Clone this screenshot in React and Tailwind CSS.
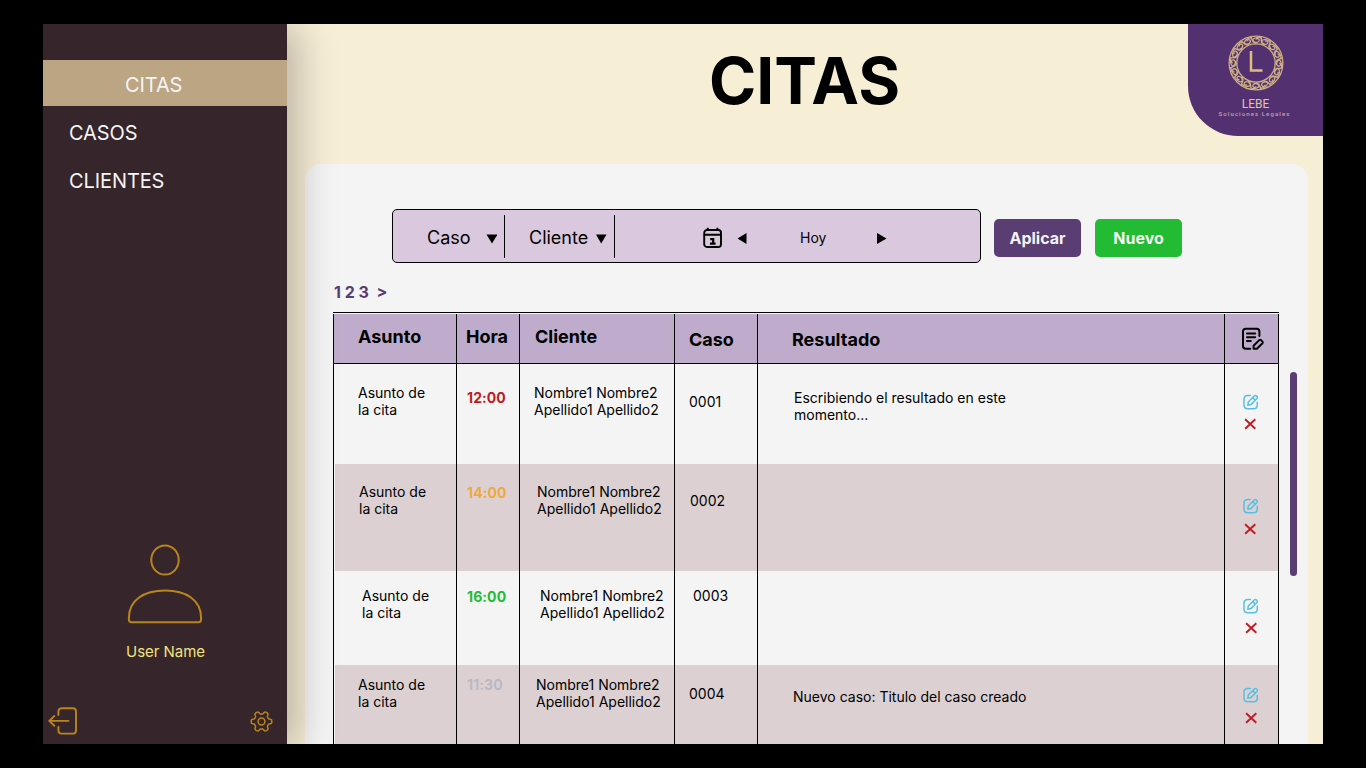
import React from "react";

const gearPath =
  Array.from({ length: 120 }, (_, i) => {
    const t = (i / 120) * Math.PI * 2;
    const r = 8.9 + 1.45 * Math.tanh(2.2 * Math.cos(6 * t));
    return `${i ? "L" : "M"}${(11.5 + r * Math.cos(t)).toFixed(2)} ${(11.5 + r * Math.sin(t)).toFixed(2)}`;
  }).join("") + "Z";

const ringAngles = Array.from({ length: 16 }, (_, i) => i * 22.5);

function Crest() {
  return (
    <svg width="56" height="56" viewBox="-28 -28 56 56" fill="none" stroke="#cdb084" className="shrink-0">
      <circle r="26.9" strokeWidth="1.3" />
      <circle r="19.2" strokeWidth="1.3" />
      {ringAngles.map((a) => (
        <g key={a} transform={`rotate(${a})`} strokeWidth="1.3">
          <path d="M-5 -26C-4 -21 1 -19 3 -22C4 -24.5 .5 -25.5 0 -23.3" />
          <path d="M5 -25C2 -26.5 -3 -25 -3.5 -22.5C-3.5 -20.5 -.5 -20 0 -19.5" />
        </g>
      ))}
      <path d="M-5 -12V7.600H6.500" stroke="#e0bd7c" strokeWidth="2.500" />
    </svg>
  );
}

function UserIcon() {
  return (
    <svg width="76" height="80" viewBox="0 0 76 80" fill="none" stroke="#b8861b" strokeWidth="2">
      <ellipse cx="38" cy="16" rx="13.7" ry="14.6" />
      <path d="M1.9 74C1.9 56 17 46.6 38 46.6S74.100 56 74.100 74V75.500Q74.100 78.200 71.400 78.200H4.600Q1.900 78.200 1.900 75.500Z" />
    </svg>
  );
}

function LogoutIcon() {
  return (
    <svg width="30" height="28" viewBox="0 0 30 28" fill="none" stroke="#b8861b" strokeWidth="1.9" strokeLinecap="round" strokeLinejoin="round">
      <path d="M10.400 8V4.500Q10.400 1.300 13.600 1.300H24.800Q28 1.300 28 4.500V23.400Q28 26.600 24.800 26.600H13.600Q10.400 26.600 10.400 23.400V20" />
      <path d="M20.500 13.900H1.300M6.300 9L1.300 13.900L6.300 18.800" />
    </svg>
  );
}

function GearIcon() {
  return (
    <svg width="23" height="23" viewBox="0 0 23 23" fill="none" stroke="#b8861b" strokeWidth="1.5" strokeLinejoin="round">
      <path d={gearPath} />
      <circle cx="11.500" cy="11.500" r="3.400" />
    </svg>
  );
}

function CalendarIcon() {
  return (
    <svg width="20" height="22" viewBox="0 0 20 22" fill="none" stroke="#000" strokeWidth="1.9">
      <rect x="1.200" y="3" width="16.800" height="17" rx="2.800" />
      <path d="M1.200 7.800H18M4.800 .8V3M14.400 .8V3" />
      <path d="M7.200 12.200H10.200V16.600M7 16.700H12.600" strokeWidth="2.200" />
    </svg>
  );
}

function NotesIcon() {
  return (
    <svg width="24" height="24" viewBox="0 0 24 24" fill="none" stroke="#000" strokeWidth="2" strokeLinecap="round" strokeLinejoin="round">
      <path d="M18.400 9V4.500Q18.400 1.700 15.600 1.700H4.800Q2 1.700 2 4.500V18.900Q2 21.700 4.800 21.700H9.300" />
      <path d="M6 6.500H14.200M6 10.300H14.200M6 14.100H9.800" />
      <path d="M12.600 21.800V18.800L18.200 13.100Q19.100 12.300 20 13.100L21.500 14.600Q22.200 15.400 21.500 16.200L15.900 21.800Z" />
    </svg>
  );
}

function EditIcon() {
  return (
    <svg width="16" height="16" viewBox="0 0 16 16" fill="none" stroke="#58bfe0" strokeWidth="1.500" strokeLinecap="round" strokeLinejoin="round">
      <path d="M7.400 1.500H4.800Q1 1.500 1 5.300V11Q1 14.800 4.800 14.800H10.500Q14.300 14.800 14.300 11V8.300" />
      <path d="M4.800 11.200L5.300 8L11 2.300C12 1.300 13 1.400 13.800 2.200C14.500 3 14.500 3.900 13.600 4.800L7.900 10.600ZM10 3.500Q10.700 5.300 12.500 5.900" />
    </svg>
  );
}

function DeleteIcon() {
  return (
    <svg width="12" height="12" viewBox="0 0 12 12" fill="none" stroke="#bf1b22" strokeWidth="1.900">
      <path d="M1.100 1.200L11.300 10.800M11.300 1.200L1.100 10.800" />
    </svg>
  );
}

const columns = "grid grid-cols-[123px_63px_155px_83px_467px_55px]";

const rows = [
  {
    row: "h-[100px]",
    bg: "bg-[#f4f4f4]",
    asunto: "pt-[20px] pl-[24px]",
    hora: "pt-[25px] text-[#bf1b22]",
    cliente: "pt-[20px] pl-[14px]",
    caso: "pt-[29px] pl-[14px]",
    resPad: "pt-[25px] pl-[36px]",
    actions: "pt-[30px] pl-[18px]",
    del: "ml-[1px]",
    time: "12:00",
    id: "0001",
    res: ["Escribiendo el resultado en este", "momento..."],
  },
  {
    row: "h-[107px]",
    bg: "bg-[#dcd0d2]",
    asunto: "pt-[19px] pl-[25px]",
    hora: "pt-[20px] text-[#f0a83c]",
    cliente: "pt-[19px] pl-[17px]",
    caso: "pt-[28px] pl-[15px]",
    resPad: "pt-[26px] pl-[36px]",
    actions: "pt-[34px] pl-[18px]",
    del: "ml-[1px] mt-[1px]",
    time: "14:00",
    id: "0002",
    res: [],
  },
  {
    row: "h-[94px]",
    bg: "bg-[#f4f4f4]",
    asunto: "pt-[16px] pl-[28px]",
    hora: "pt-[17px] text-[#22bb33]",
    cliente: "pt-[16px] pl-[20px]",
    caso: "pt-[16px] pl-[18px]",
    resPad: "pt-[26px] pl-[36px]",
    actions: "pt-[27px] pl-[18px]",
    del: "ml-[2px]",
    time: "16:00",
    id: "0003",
    res: [],
  },
  {
    row: "h-[79px]",
    bg: "bg-[#dcd0d2]",
    asunto: "pt-[11px] pl-[24px]",
    hora: "pt-[11px] text-[#b9b9c3]",
    cliente: "pt-[11px] pl-[16px]",
    caso: "pt-[20px] pl-[14px]",
    resPad: "pt-[23px] pl-[35px]",
    actions: "pt-[22px] pl-[18px]",
    del: "ml-[2px] mt-[1px]",
    time: "11:30",
    id: "0004",
    res: ["Nuevo caso: Titulo del caso creado"],
  },
];

function Sidebar() {
  return (
    <aside className="relative z-10 flex w-[244px] shrink-0 flex-col bg-[#36252b] shadow-[11px_4px_36px_0px_rgba(0,0,0,0.25)]">
      <nav className="flex flex-col pt-9 text-[20px] leading-6 text-[#f4f4f4]">
        <a className="flex h-[46px] items-center bg-[#bba583] pt-1 pl-[82px] tracking-[-0.1px]">CITAS</a>
        <a className="flex h-12 items-center pt-[6px] pl-[26px] tracking-[-0.1px]">CASOS</a>
        <a className="flex h-12 items-center pt-[6px] pl-[26px] tracking-[-0.1px]">CLIENTES</a>
      </nav>
      <div className="mt-auto flex flex-col items-center pb-[46px]">
        <UserIcon />
        <p className="mt-[19px] ml-px text-[15px] leading-[18px] tracking-[-0.05px] text-[#f3e27c]">User Name</p>
      </div>
      <div className="flex items-center justify-between pr-[14px] pb-[9px] pl-[5px]">
        <LogoutIcon />
        <GearIcon />
      </div>
    </aside>
  );
}

function Filters() {
  return (
    <div className="ml-[87px] flex items-center">
      <div className="flex h-[54px] w-[589px] items-center rounded-[5px] border border-black bg-[#dac9de] text-[18px] leading-[22px]">
        <div className="flex h-[43px] w-[112px] items-center border-r border-black pt-[3px] pl-[34px]">
          <span className="w-[59px]">Caso</span>
          <svg className="mt-[2px]" width="11" height="10" viewBox="0 0 11 10"><path d="M.5 .5H11.500L6 9.500Z" /></svg>
        </div>
        <div className="flex h-[43px] w-[110px] items-center border-r border-black pt-[3px] pl-[24px]">
          <span className="w-[67px]">Cliente</span>
          <svg className="mt-[2px]" width="11" height="10" viewBox="0 0 11 10"><path d="M0 .5H10.500L5.200 9.500Z" /></svg>
        </div>
        <div className="flex items-center pt-[3px] pl-[88px]">
          <CalendarIcon />
          <svg className="mt-[2px] ml-[14px]" width="10" height="11" viewBox="0 0 10 11"><path d="M9.500 0V11L.5 5.500Z" /></svg>
          <span className="ml-[53px] w-[77px] text-[14px] leading-[17px]">Hoy</span>
          <svg className="mt-[2px]" width="10" height="11" viewBox="0 0 10 11"><path d="M0 0V11L9.500 5.500Z" /></svg>
        </div>
      </div>
      <button className="ml-[13px] mt-[3px] h-[38px] w-[87px] rounded-[5px] bg-[#593d73] text-[16px] font-bold text-[#f4f4f4]">Aplicar</button>
      <button className="ml-[14px] mt-[3px] h-[38px] w-[87px] rounded-[5px] bg-[#22bb33] text-[16px] font-bold text-[#f4f4f4]">Nuevo</button>
    </div>
  );
}

function Table() {
  return (
    <div className="mt-[10px] w-[946px] border-t border-black">
      <div className={`${columns} h-[51px] border-b border-black pt-px text-[18px] leading-[22px] font-bold`}>
        <div className="border-l border-black bg-[#bfaccc] pt-[12px] pl-[24px]">Asunto</div>
        <div className="border-l border-black bg-[#bfaccc] pt-[12px] pl-[9px]">Hora</div>
        <div className="border-l border-black bg-[#bfaccc] pt-[12px] pl-[15px]">Cliente</div>
        <div className="border-l border-black bg-[#bfaccc] pt-[15px] pl-[14px]">Caso</div>
        <div className="border-l border-black bg-[#bfaccc] pt-[15px] pl-[34px]">Resultado</div>
        <div className="border-x border-black bg-[#bfaccc] pt-[13px] pl-[16px]"><NotesIcon /></div>
      </div>
      {rows.map((r) => (
        <div key={r.id} className={`${columns} ${r.row} ${r.bg} text-[14px] leading-[17px]`}>
          <div className={`border-l border-black shadow-[inset_1px_0_0_#f4f4f4] ${r.asunto}`}>Asunto de<br />la cita</div>
          <div className={`border-l border-black pl-[10px] font-bold tracking-[0.1px] ${r.hora}`}>{r.time}</div>
          <div className={`border-l border-black whitespace-nowrap ${r.cliente}`}>Nombre1 Nombre2<br />Apellido1 Apellido2</div>
          <div className={`border-l border-black ${r.caso}`}>{r.id}</div>
          <div className={`border-l border-black ${r.resPad}`}>
            {r.res.map((line) => <p key={line}>{line}</p>)}
          </div>
          <div className={`flex flex-col gap-2 border-x border-black ${r.actions}`}>
            <EditIcon />
            <div className={r.del}><DeleteIcon /></div>
          </div>
        </div>
      ))}
    </div>
  );
}

export default function App() {
  return (
    <div className="h-[768px] w-[1366px] overflow-hidden bg-black px-[43px] py-6 font-['Inter',sans-serif] text-black">
      <div className="flex h-[720px] w-[1280px] overflow-hidden bg-[#f7eed6]">
        <Sidebar />
        <main className="flex min-w-0 flex-1 flex-col">
          <header className="flex h-[140px] shrink-0 items-start justify-between pl-[422px]">
            <h1 className="pt-[18px] text-[64px] leading-[78px] font-bold">CITAS</h1>
            <div className="flex h-[112px] w-[135px] flex-col items-center rounded-bl-[50px] bg-[#533171] pt-[11px]">
              <Crest />
              <span className="mt-[6px] font-['Roboto',sans-serif] text-[12px] leading-[14px] text-[#e0c4a0]">LEBE</span>
              <span className="-ml-[2px] font-['Roboto',sans-serif] text-[6px] leading-[6px] font-medium tracking-[1.1px] whitespace-nowrap text-[#c4a5a3]">Soluciones Legales</span>
            </div>
          </header>
          <section className="mr-[15px] ml-[18px] flex flex-1 flex-col rounded-t-[16px] bg-[#f4f4f4] pt-[45px]">
            <Filters />
            <p className="mt-[19px] pl-[29px] text-[16px] leading-[20px] font-bold whitespace-pre text-[#593d73]">1 2 3  &gt;</p>
            <div className="flex pl-[28px]">
              <Table />
              <div className="mt-[70px] ml-[11px] h-[204px] w-[7px] rounded-full bg-[#593d73]" />
            </div>
          </section>
        </main>
      </div>
    </div>
  );
}
